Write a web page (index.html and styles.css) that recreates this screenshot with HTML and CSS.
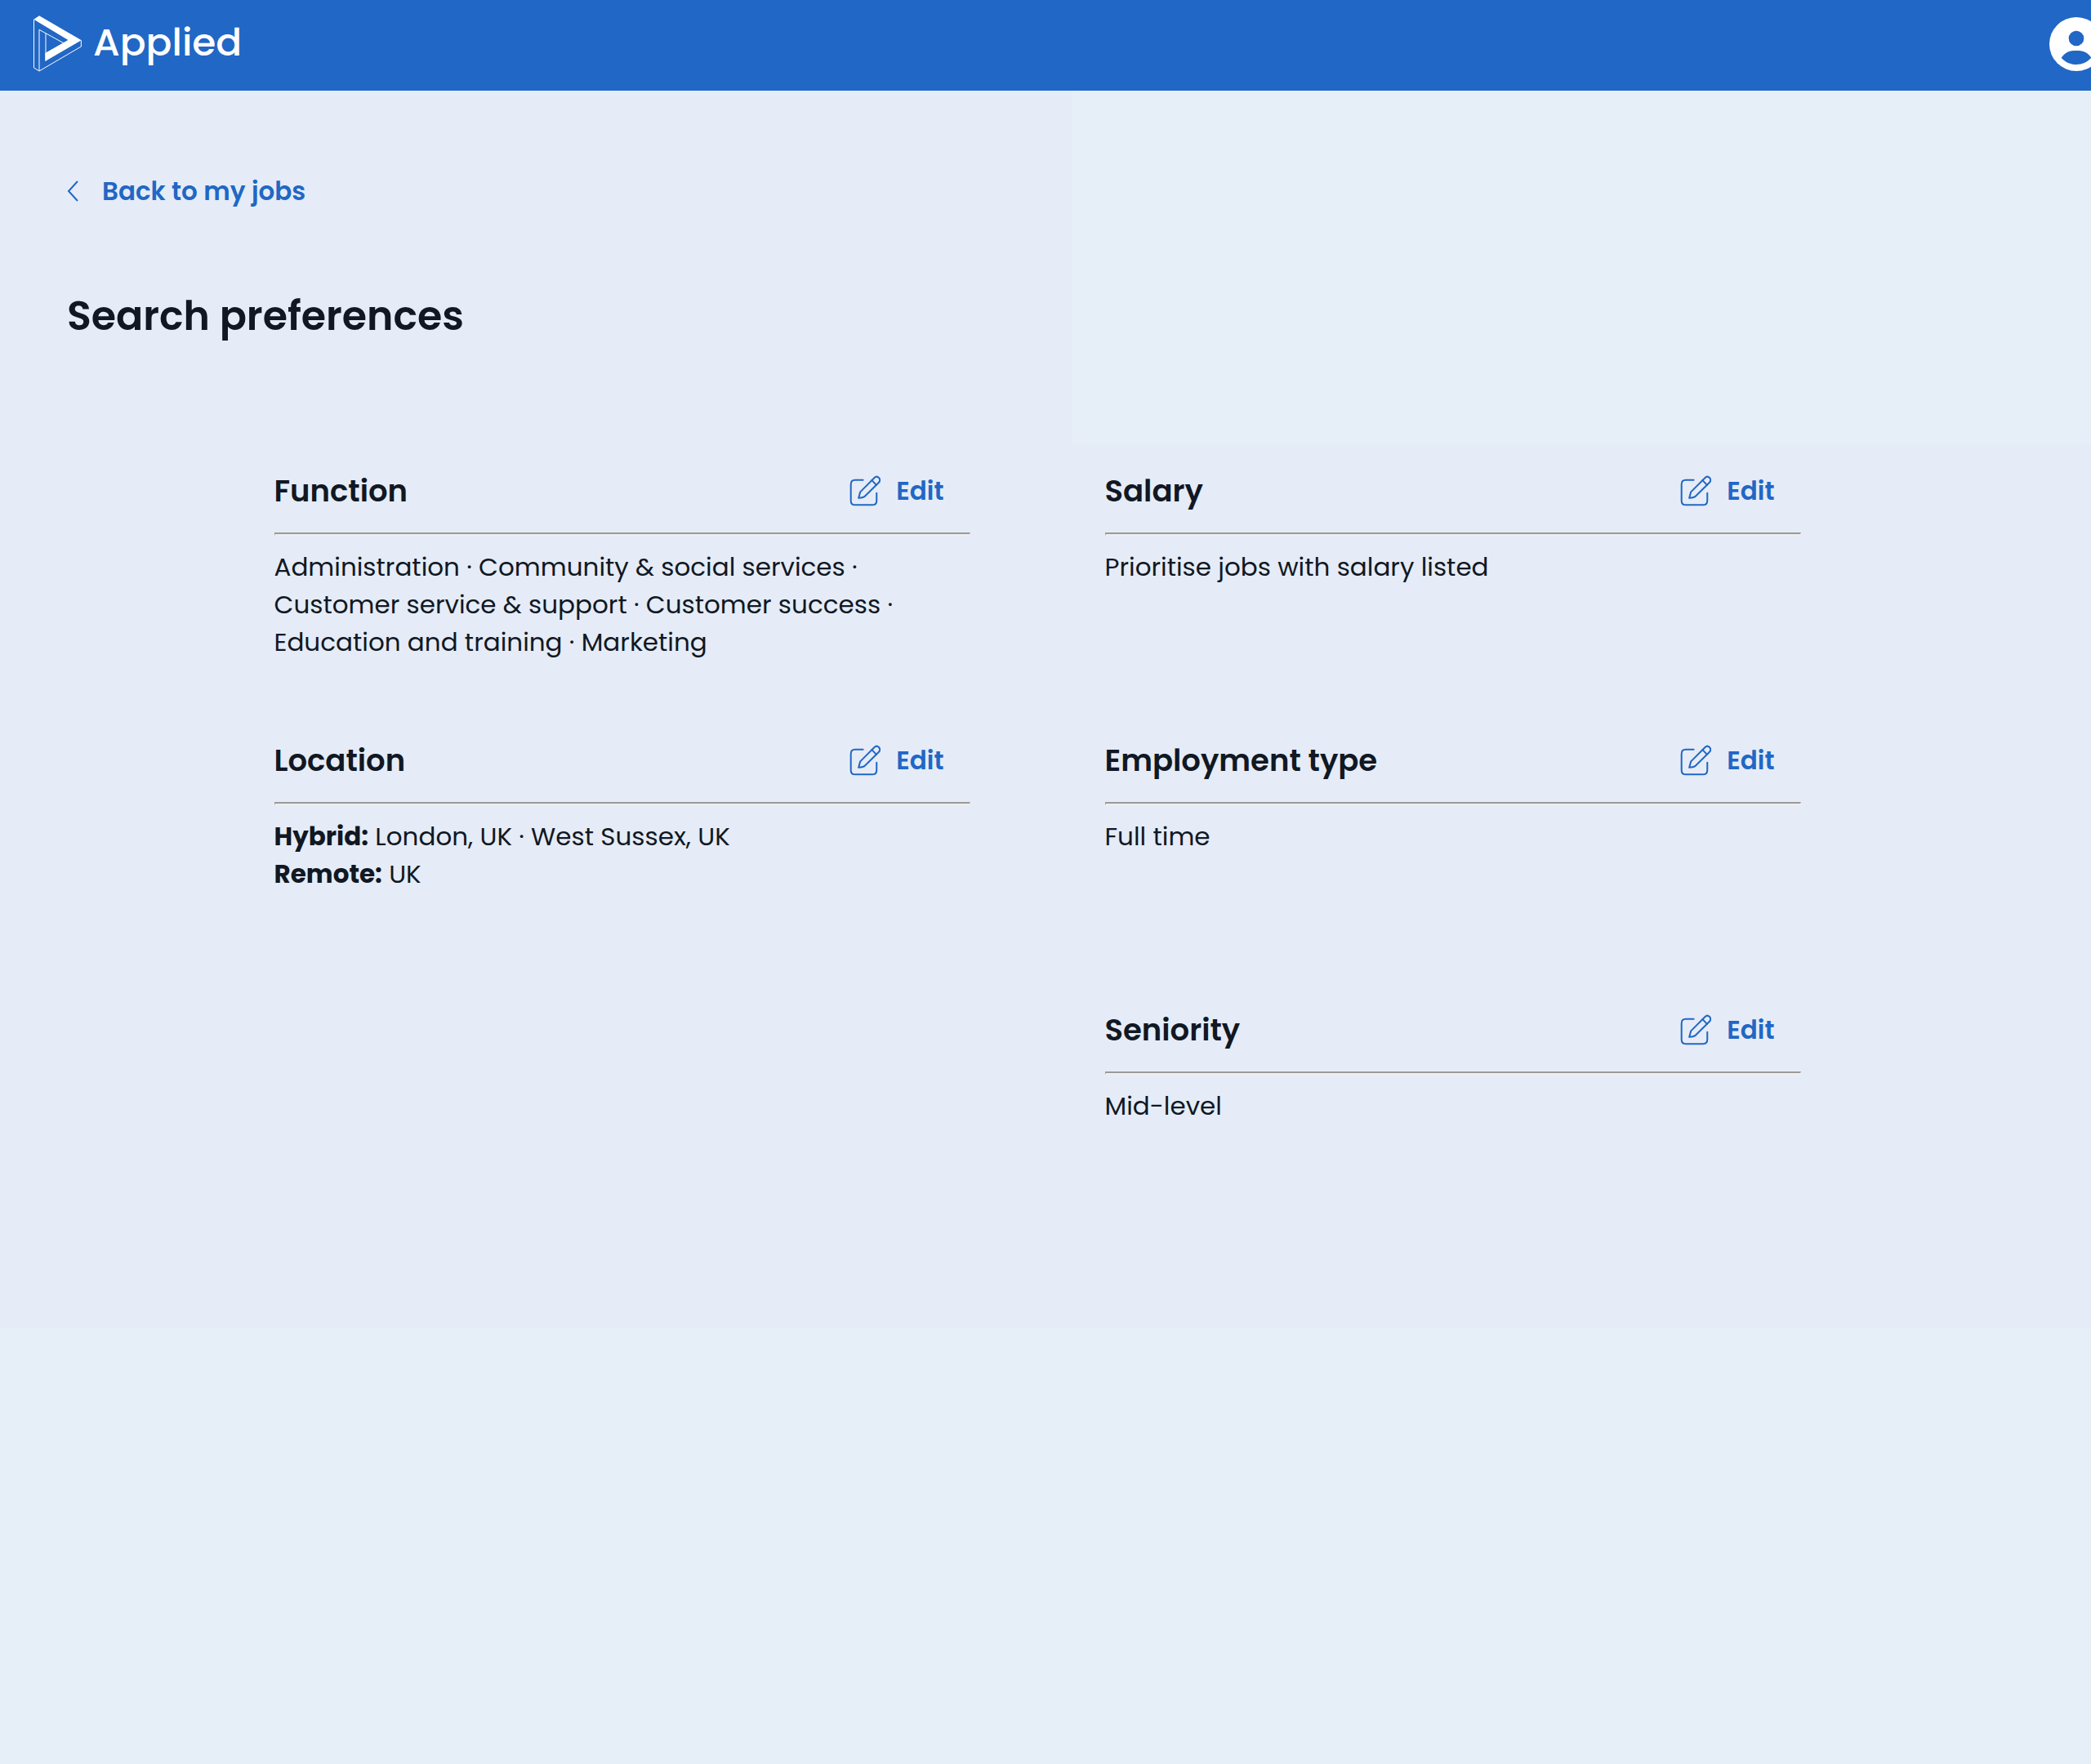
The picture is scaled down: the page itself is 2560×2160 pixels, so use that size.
FILE: index.html
```html
<!DOCTYPE html>
<html lang="en">
<head>
<meta charset="utf-8">
<meta name="viewport" content="width=device-width, initial-scale=1">
<title>Search preferences</title>
<link rel="stylesheet" href="styles.css">
</head>
<body>
<svg class="sprite" aria-hidden="true">
  <symbol id="edit" viewBox="0 0 112 112">
    <g fill="none" stroke="currentColor" stroke-width="6" stroke-linecap="round" stroke-linejoin="round">
      <path d="M49 17H20Q5 17 5 33V91Q5 107 20 107H82Q98 107 98 91V64"/>
      <path d="M33 82L39 60L90 9Q98 1 106 9Q114 17 106 26L56 75Q51 80 33 82Z"/>
      <path d="M81 18L97 35"/>
    </g>
  </symbol>
</svg>
<header class="topbar">
  <a class="brand" href="#">
    <svg class="brand-mark" viewBox="120 60 183 207" aria-hidden="true">
      <path fill="#fff" d="M124 74L144 61L299 151L166 228V198L250 150Z"/>
      <path fill="none" stroke="#fff" stroke-width="3" d="M124.500 75V252L144 264L298 174V151M144 264V112L235 162M168 126V226"/>
    </svg>
    <span>Applied</span>
  </a>
  <button class="avatar" type="button" aria-label="Account">
    <svg viewBox="0 0 198 198" aria-hidden="true">
      <circle cx="99" cy="99" r="99" fill="#fff"/>
      <circle cx="99" cy="78" r="28" fill="#2167c5"/>
      <path fill="#2167c5" d="M44 149C60 127 75 123 99 123S138 127 154 149C140 165 121 174 99 174S58 165 44 149Z"/>
    </svg>
  </button>
</header>
<main class="page">
  <a class="back" href="#">
    <svg class="chevron" viewBox="0 0 14 26" aria-hidden="true"><path d="M13 1L2 13L13 25" fill="none" stroke="currentColor" stroke-width="2"/></svg>
    Back to my jobs
  </a>
  <h1 class="title">Search preferences</h1>
  <div class="prefs">
    <div class="column">
      <section class="pref">
        <div class="pref-head"><h2>Function</h2><button class="edit" type="button"><svg aria-hidden="true"><use href="#edit"/></svg>Edit</button></div>
        <hr>
        <p>Administration · Community &amp; social services · Customer service &amp; support · Customer success · Education and training · Marketing</p>
      </section>
      <section class="pref">
        <div class="pref-head"><h2>Location</h2><button class="edit" type="button"><svg aria-hidden="true"><use href="#edit"/></svg>Edit</button></div>
        <hr>
        <p><strong>Hybrid:</strong> London, UK · West Sussex, UK<br><strong>Remote:</strong> UK</p>
      </section>
    </div>
    <div class="column">
      <section class="pref">
        <div class="pref-head"><h2>Salary</h2><button class="edit" type="button"><svg aria-hidden="true"><use href="#edit"/></svg>Edit</button></div>
        <hr>
        <p>Prioritise jobs with salary listed</p>
      </section>
      <section class="pref">
        <div class="pref-head"><h2>Employment type</h2><button class="edit" type="button"><svg aria-hidden="true"><use href="#edit"/></svg>Edit</button></div>
        <hr>
        <p>Full time</p>
      </section>
      <section class="pref">
        <div class="pref-head"><h2>Seniority</h2><button class="edit" type="button"><svg aria-hidden="true"><use href="#edit"/></svg>Edit</button></div>
        <hr>
        <p>Mid-level</p>
      </section>
    </div>
  </div>
</main>
</body>
</html>
```
FILE: styles.css
```css
* { box-sizing: border-box; }
body {
  margin: 0;
  min-height: 100vh;
  overflow-x: hidden;
  background: #e6eef8;
  color: #111823;
  font: 400 31px/46px Poppins, Inter, sans-serif;
}
h1, h2, p { margin: 0; }
button { font: inherit; border: 0; padding: 0; background: none; cursor: pointer; }
.sprite { display: none; }
.topbar {
  display: flex;
  align-items: center;
  justify-content: space-between;
  height: 111px;
  padding: 0 0 4px 40px;
  background: #2167c5;
}
.brand {
  display: flex;
  align-items: center;
  gap: 13px;
  color: #fff;
  font-size: 47px;
  font-weight: 500;
  line-height: 60px;
  text-decoration: none;
}
.brand span { padding-bottom: 4px; }
.brand-mark { width: 61px; height: 69px; }
.avatar { width: 66px; height: 66px; margin-right: -15px; }
.avatar svg { display: block; width: 66px; height: 66px; }
.page {
  padding: 100px 102px 60px 82px;
  background: linear-gradient(#e6eef8, #e6eef8) 100% 0 / calc(50% - 33px) 432px no-repeat #e5ecf7;
}
.back {
  display: flex;
  align-items: center;
  gap: 29px;
  width: max-content;
  color: #2167c5;
  font-weight: 600;
  text-decoration: none;
}
.chevron { width: 14px; height: 26px; }
.title { margin-top: 100px; font-size: 49px; font-weight: 600; line-height: 60px; }
.prefs {
  display: grid;
  grid-template-columns: 1fr 1fr;
  gap: 165px;
  max-width: 1869px;
  margin: 160px auto 0;
}
.pref { min-height: 330px; }
.pref-head {
  display: flex;
  align-items: center;
  justify-content: space-between;
  height: 48px;
  padding-right: 32px;
}
h2 { font-size: 37px; font-weight: 600; line-height: 48px; }
.edit { display: flex; align-items: center; gap: 19px; color: #2167c5; font-weight: 600; }
.edit svg { width: 38px; height: 38px; }
hr {
  margin: 27px 0 15px;
  border-style: solid;
  border-width: 2px 1px;
  border-color: #9a9a9a #eee #eee #9a9a9a;
}
p { padding-right: 60px; }
strong { font-weight: 700; }
```
